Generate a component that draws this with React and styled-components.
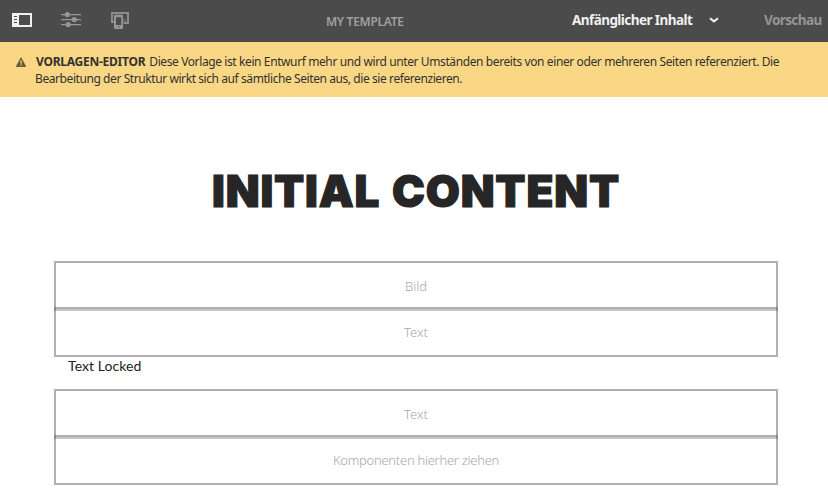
import React from "react";
import styled, { createGlobalStyle } from "styled-components";

const GlobalStyle = createGlobalStyle`
  * { box-sizing: border-box; }
  body { margin: 0; background: #fff; overflow: hidden; font-family: "Noto Sans", "Open Sans", sans-serif; }
`;

const Page = styled.div`
  width: 828px;
  height: 496px;
  display: flex;
  flex-direction: column;
`;

const Toolbar = styled.header`
  height: 42px;
  flex: none;
  display: grid;
  grid-template-columns: 326px 246px 192px 64px;
  align-items: center;
  background: #4b4b4b;
  white-space: nowrap;
  padding-bottom: 2px;
`;

const Tools = styled.div`
  display: flex;
  align-items: center;
  padding-left: 12px;
  gap: 29px;
  svg { display: block; }
  svg:last-child { margin: 1px 0 0 1px; }
`;

const Title = styled.span`
  font-size: 12px;
  font-weight: 600;
  letter-spacing: ${(p) => p.$spacing}px;
  color: #a0a0a0;
  padding-top: 3px;
`;

const Mode = styled.span`
  display: flex;
  align-items: center;
  gap: 17px;
  font-size: 13.5px;
  font-weight: 700;
  letter-spacing: ${(p) => p.$spacing}px;
  color: ${(p) => (p.$active ? "#f0f0f0" : "#969696")};
`;

const Banner = styled.section`
  height: 55px;
  flex: none;
  display: flex;
  background: #fad784;
  color: #323232;
  font-size: 12px;
  line-height: 17px;
  padding: 11px 0 0 16px;
  white-space: nowrap;
  svg { flex: none; margin: 4px 9px 0 0; }
`;

const Line = styled.div`
  letter-spacing: ${(p) => p.$spacing}px;
`;

const Strong = styled.strong`
  letter-spacing: ${(p) => p.$spacing}px;
  margin: 0 4px 0 1px;
`;

const Content = styled.main`
  display: flex;
  flex-direction: column;
  padding: 64px 50px 0 54px;
`;

const Heading = styled.h1`
  margin: 0;
  height: 100px;
  line-height: 60px;
  text-align: center;
  white-space: nowrap;
  font-family: Inter, sans-serif;
  font-weight: 900;
  font-size: 44px;
  letter-spacing: 0.85px;
  word-spacing: 2px;
  -webkit-text-stroke: 1.2px #262626;
  color: #262626;
`;

const Slot = styled.div`
  height: 50px;
  display: flex;
  align-items: center;
  justify-content: center;
  border: 2px solid rgba(92, 92, 92, 0.485);
  border-bottom-color: ${(p) => (p.$joined ? "rgba(92, 92, 92, 0.35)" : "rgba(92, 92, 92, 0.485)")};
  font-size: 13px;
  font-weight: 300;
  letter-spacing: ${(p) => p.$spacing || 0}px;
  color: #a8a8a8;
  & + & { margin-top: -4px; }
`;

const Locked = styled.p`
  margin: 0;
  height: 32px;
  padding-left: 14px;
  font-family: Lato, sans-serif;
  font-size: 14px;
  line-height: 18px;
  letter-spacing: ${(p) => p.$spacing}px;
  color: #222;
`;

const PanelIcon = () => (
  <svg width="20" height="14" viewBox="0 0 20 14" shapeRendering="crispEdges">
    <path fill="#f0f0f0" fillRule="evenodd" d="M0 0h20v14H0zM7 2h11v10H7zM2 3h3v1H2zM2 6h3v1H2zM2 9h3v1H2z" />
  </svg>
);

const SlidersIcon = () => (
  <svg width="20" height="16" viewBox="0 0 20 16" fill="#969696">
    <path d="M0 2h20v1.2H0zM0 7h20v1.2H0zM0 12h20v1.2H0z" />
    <circle cx="6.3" cy="2.6" r="2.6" />
    <circle cx="13.3" cy="7.6" r="2.6" />
    <circle cx="7.2" cy="12.6" r="2.6" />
  </svg>
);

const DevicesIcon = () => (
  <svg width="18" height="17" viewBox="0 0 18 17">
    <path fill="#8c8c8c" d="M0 0h18v12h-5v-2h3V2H2v7h1v2H0z" />
    <path fill="#8c8c8c" d="M12 7h3v5h-3z" opacity=".4" />
    <rect x="3" y="2.7" width="9" height="14.3" rx="1.3" fill="#969696" />
    <path fill="#4b4b4b" d="M5 5.2h5.3V13H5zM7 14.4h1.5v1.2H7z" />
  </svg>
);

const ChevronIcon = () => (
  <svg width="10" height="6" viewBox="0 0 10 6">
    <path d="M1 1.2 5 4.4 9 1.2" fill="none" stroke="#f0f0f0" strokeWidth="2" />
  </svg>
);

const AlertIcon = () => (
  <svg width="10" height="10" viewBox="0 0 10 10">
    <path fill="#6a5a36" d="M5 0 10 9.2Q10 10 9.3 10H.7Q0 10 0 9.2Z" />
    <path fill="#fad784" d="M4.4 3.3h1.2v3.4H4.4zM4.4 7.6h1.2v1.2H4.4z" />
  </svg>
);

export default function App() {
  return (
    <Page>
      <GlobalStyle />
      <Toolbar>
        <Tools>
          <PanelIcon />
          <SlidersIcon />
          <DevicesIcon />
        </Tools>
        <Title $spacing={-0.3}>MY TEMPLATE</Title>
        <Mode $active $spacing={-0.56}>
          Anfänglicher Inhalt
          <ChevronIcon />
        </Mode>
        <Mode $spacing={-0.6}>Vorschau</Mode>
      </Toolbar>
      <Banner>
        <AlertIcon />
        <div>
          <Line $spacing={-0.395}>
            <Strong $spacing={-0.25}>VORLAGEN-EDITOR</Strong>
            Diese Vorlage ist kein Entwurf mehr und wird unter Umständen bereits von einer oder mehreren Seiten referenziert. Die
          </Line>
          <Line $spacing={-0.42}>Bearbeitung der Struktur wirkt sich auf sämtliche Seiten aus, die sie referenzieren.</Line>
        </div>
      </Banner>
      <Content>
        <Heading>INITIAL CONTENT</Heading>
        <Slot $joined>Bild</Slot>
        <Slot>Text</Slot>
        <Locked $spacing={0.07}>Text Locked</Locked>
        <Slot $joined>Text</Slot>
        <Slot $spacing={-0.27}>Komponenten hierher ziehen</Slot>
      </Content>
    </Page>
  );
}
